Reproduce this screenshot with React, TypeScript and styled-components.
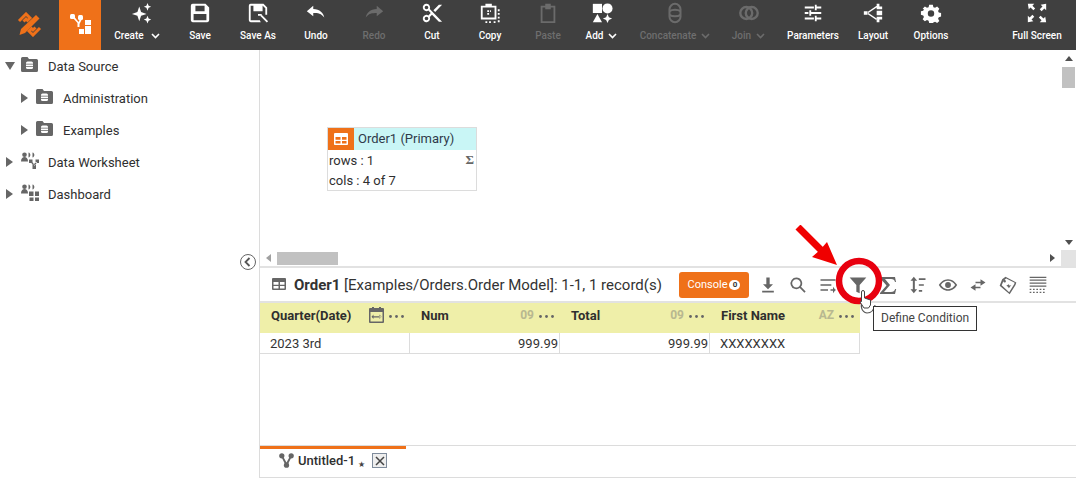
import styled, { createGlobalStyle } from "styled-components";
import type { ReactNode } from "react";

const DARK = "#404040";
const ORANGE = "#ef7119";
const GREY = "#666666";

const GlobalStyle = createGlobalStyle`
  html, body {
    margin: 0;
    padding: 0;
    background: #ffffff;
    font-family: Roboto, "Liberation Sans", sans-serif;
    overflow: hidden;
  }
`;

type IconProps = { children: ReactNode; size?: number; color?: string };

function Icon({ children, size = 22, color = "#ffffff" }: IconProps) {
  return (
    <svg width={size} height={size} viewBox="0 0 24 24" fill={color} stroke="none">
      {children}
    </svg>
  );
}

const Chevron = ({ color }: { color: string }) => (
  <svg width="9" height="6" viewBox="0 0 9 6" fill="none" stroke={color} strokeWidth="1.6">
    <path d="M1 1l3.5 3.5L8 1" />
  </svg>
);

const toolbarItems: {
  label: string;
  width: number;
  disabled?: boolean;
  menu?: boolean;
  pull?: number;
  icon: ReactNode;
}[] = [
  {
    label: "Create",
    width: 59,
    menu: true,
    pull: 9,
    icon: (
      <>
        <path d="M9 5l2 6 6 2-6 2-2 6-2-6-6-2 6-2z" />
        <path d="M18 1l1.2 3 2.8 1.2-2.8 1.2L18 9.5l-1.2-3.1-2.8-1.2 2.8-1.2zM18 15l1.2 3 2.8 1.2-2.8 1.2-1.2 3-1.2-3-2.8-1.2 2.8-1.2z" />
      </>
    ),
  },
  {
    label: "Save",
    width: 58,
    icon: (
      <path
        fillRule="evenodd"
        d="M5 2h13l4 4v14a2 2 0 0 1-2 2H4a2 2 0 0 1-2-2V4a2 2 0 0 1 2-2zm2 2v6h10V4zm-2 9v7h14v-7z"
      />
    ),
  },
  {
    label: "Save As",
    width: 58,
    icon: (
      <>
        <path
          fillRule="evenodd"
          d="M4 2h14l4 4v8h-2V6.800L17.200 4H17v6H7V4H4v16h10l1 2H4a2 2 0 0 1-2-2V4a2 2 0 0 1 2-2zm8 11h4v2h-4z"
        />
        <path d="M16 14l7 7-1.400 1.400-7-7z" />
      </>
    ),
  },
  {
    label: "Undo",
    width: 58,
    icon: <path d="M9 7.500V4L2 10l7 5.500V12c5 0 9 .5 12 5-.5-5-5-9.500-12-9.500z" />,
  },
  {
    label: "Redo",
    width: 58,
    disabled: true,
    icon: <path d="M15 7.500V4l7 6-7 5.500V12c-5 0-9 .5-12 5 .5-5 5-9.500 12-9.500z" />,
  },
  {
    label: "Cut",
    width: 58,
    icon: (
      <path d="M9.600 7.600A4 4 0 1 0 8 9.400l2.600 2.600L8 14.600a4 4 0 1 0 1.600 1.800l2.400-2.400 7.500 7.500H23zM6 8a2 2 0 1 1 0-4 2 2 0 0 1 0 4zm0 12a2 2 0 1 1 0-4 2 2 0 0 1 0 4zM23 3h-3.500l-6 6 2 2z" />
    ),
  },
  {
    label: "Copy",
    width: 58,
    icon: (
      <>
        <path fillRule="evenodd" d="M2 4h5V2h7v2h5v15H2zm2 2v11h13V6z" />
        <path d="M9 9h2v2H9zM12 9h1v2h-1zM9 12h2v2H9zM20.500 8h2v2h-2zM20.500 12h2v2h-2zM20.500 16h2v2h-2zM20.500 20h2v2h-2zM16 21h2v2h-2zM11 21h2v2h-2zM7 21h2v2H7z" />
      </>
    ),
  },
  {
    label: "Paste",
    width: 58,
    disabled: true,
    icon: <path fillRule="evenodd" d="M4 4h5V2h6v2h5v19H4zm2 2v15h12V6h-3v2H9V6z" />,
  },
  {
    label: "Add",
    width: 49,
    menu: true,
    icon: (
      <>
        <path d="M2 2h10v10H2z" />
        <circle cx="18" cy="7" r="5.500" />
        <path d="M7 13l5 9H2z" />
        <path d="M18 13l1.500 3.500L23 18l-3.500 1.500L18 23l-1.500-3.500L13 18l3.500-1.500z" />
      </>
    ),
  },
  {
    label: "Concatenate",
    width: 98,
    disabled: true,
    menu: true,
    icon: (
      <g fill="none" stroke="#6b6b6b" strokeWidth="2.200">
        <rect x="6" y="2" width="12" height="20" rx="6" />
        <path d="M6 10c3-2 9-2 12 0M6 14c3 2 9 2 12 0" />
      </g>
    ),
  },
  {
    label: "Join",
    width: 49,
    disabled: true,
    menu: true,
    icon: (
      <g fill="none" stroke="#6b6b6b" strokeWidth="2.600">
        <circle cx="9" cy="12" r="6.500" />
        <circle cx="15" cy="12" r="6.500" />
      </g>
    ),
  },
];

const rightItems: { label: string; width: number; icon: ReactNode }[] = [
  {
    label: "Parameters",
    width: 72,
    icon: (
      <path d="M3 5h10v2H3zM16 5h5v2h-5zM14 3h2v6h-2zM3 11h4v2H3zM10 11h11v2H10zM8 9h2v6H8zM3 17h10v2H3zM16 17h5v2h-5zM14 15h2v6h-2z" />
    ),
  },
  {
    label: "Layout",
    width: 48,
    icon: (
      <path d="M2 10h4v4H2zM16 2h3v3h3v3h-6zM16 9.500h6v5h-6zM16 16h6v3h-3v3h-3zM6 11l10-7 .8 1.400L7 12zM6 13l10 7 .8-1.400L7 12z" />
    ),
  },
  {
    label: "Options",
    width: 68,
    icon: (
      <path
        fillRule="evenodd"
        d="M10 3h4l.6 2.600 1.800.8 2.300-1.400 2.400 2.400-1.400 2.300.8 1.800 2.500.6v3.800l-2.500.6-.8 1.800 1.400 2.300-2.400 2.400-2.300-1.400-1.800.8L14 23h-4l-.6-2.500-1.800-.8-2.300 1.400-2.400-2.400 1.400-2.300-.8-1.800-2.500-.6v-3.800l2.500-.6.8-1.800L2.900 7.400l2.400-2.400 2.300 1.400 1.800-.8zm2 6a3.500 3.500 0 1 0 0 7 3.500 3.500 0 0 0 0-7z"
      />
    ),
  },
];

const treeRows: { label: string; open?: boolean; depth: 0 | 1; kind: "db" | "sheet" | "dash" }[] = [
  { label: "Data Source", open: true, depth: 0, kind: "db" },
  { label: "Administration", depth: 1, kind: "db" },
  { label: "Examples", depth: 1, kind: "db" },
  { label: "Data Worksheet", depth: 0, kind: "sheet" },
  { label: "Dashboard", depth: 0, kind: "dash" },
];

function TreeIcon({ kind }: { kind: "db" | "sheet" | "dash" }) {
  if (kind === "db") {
    return (
      <svg width="17" height="15" viewBox="0 0 17 15">
        <path d="M1.500 0h5l1.500 2h7.500A1.500 1.500 0 0 1 17 3.500V13.500a1.500 1.500 0 0 1-1.500 1.500h-14A1.500 1.500 0 0 1 0 13.500v-12A1.500 1.500 0 0 1 1.500 0z" fill={GREY} />
        <rect x="5" y="4.500" width="7" height="7.500" rx="1.500" fill="#ffffff" />
        <path d="M5 6.800h7v.7H5zM5 9.200h7v.7H5z" fill={GREY} />
      </svg>
    );
  }
  return (
    <svg width="18" height="17" viewBox="0 0 18 17" fill={GREY}>
      <circle cx="3.500" cy="2.800" r="2.300" />
      <path d="M0 9.500c0-3 1.500-4.500 3.500-4.500S7 6.500 7 9.500z" />
      <path d="M7.500 .5c2.500 .5 2.500 4.500 0 5zM11.500 .5c2.500 .5 2.500 4.500 0 5z" />
      {kind === "sheet" ? (
        <path d="M8 7.500h3.500V11H8zM14.500 7.500H18V11h-3.500zM11.500 13H15v4h-3.500zM10 10.500l1.200-.8 2.500 3.500-1.200.8zM16 10.500l-1.200-.8-2.500 3.500 1.200.8z" />
      ) : (
        <path d="M8 7.500h4.500V12H8zM14 7.500h4V12h-4zM8.500 13.500h4V17h-4zM14 13.500h4V17h-4z" />
      )}
    </svg>
  );
}

const GridGlyph = ({ color, size }: { color: string; size: number }) => (
  <svg width={size} height={size * 0.86} viewBox="0 0 14 12">
    <path
      fillRule="evenodd"
      fill={color}
      d="M1 0h12a1 1 0 0 1 1 1v10a1 1 0 0 1-1 1H1a1 1 0 0 1-1-1V1a1 1 0 0 1 1-1zm.500 4v2.800h5V4zm6.500 0v2.800h4.500V4zM1.500 8v2.500h5V8zM8 8v2.500h4.500V8z"
    />
  </svg>
);

const MoreDots = () => (
  <svg width="15" height="3" viewBox="0 0 15 3" fill="#666666">
    <circle cx="1.500" cy="1.500" r="1.400" />
    <circle cx="7.500" cy="1.500" r="1.400" />
    <circle cx="13.500" cy="1.500" r="1.400" />
  </svg>
);

const columns: { title: string; hint: "calendar" | string; value: string; numeric?: boolean }[] = [
  { title: "Quarter(Date)", hint: "calendar", value: "2023 3rd" },
  { title: "Num", hint: "09", value: "999.99", numeric: true },
  { title: "Total", hint: "09", value: "999.99", numeric: true },
  { title: "First Name", hint: "AZ", value: "XXXXXXXX" },
];

const panelTools: { name: string; size?: number; shape: ReactNode }[] = [
  { name: "download", shape: <path d="M10 3h4v8h4l-6 6-6-6h4zM5 19h14v2H5z" /> },
  {
    name: "search",
    shape: (
      <path
        fillRule="evenodd"
        d="M10 3a7 7 0 0 1 5.600 11.200l5.600 5.600-1.500 1.500-5.600-5.600A7 7 0 1 1 10 3zm0 2a5 5 0 1 0 0 10 5 5 0 0 0 0-10z"
      />
    ),
  },
  { name: "sort", shape: <path d="M3 5h18v2H3zM3 11h13v2H3zM3 17h9v2H3zM15 17h6v2h-6zM18 14l3 4-3 4z" /> },
  { name: "filter", shape: <path d="M2 3h20l-8 9v10l-4-2v-8z" /> },
  {
    name: "sigma",
    size: 24,
    shape: <path d="M4 4h15l1 5h-1c-.5-2-1.500-3-4-3H9l5 6-6 7h7c2.500 0 3.500-1 4.200-3h1L19 21H4v-1l6.500-7.500L4 5z" />,
  },
  { name: "height", shape: <path d="M7 2l4 5H8.200v10H11l-4 5-4-5h2.800V7H3zM13 4h8v2h-8zM13 11h6v2h-6zM13 18h4v2h-4z" /> },
  {
    name: "eye",
    shape: (
      <path
        fillRule="evenodd"
        d="M12 5c5 0 9 3.500 11 7-2 3.500-6 7-11 7S3 15.500 1 12c2-3.500 6-7 11-7zm0 2c-3.800 0-6.800 2.400-8.600 5 1.800 2.600 4.800 5 8.600 5s6.800-2.400 8.600-5C18.800 9.400 15.800 7 12 7zm0 1.500a3.500 3.500 0 1 1 0 7 3.500 3.500 0 0 1 0-7z"
      />
    ),
  },
  { name: "swap", shape: <path d="M15 5l6 4-6 4v-3H9V8h6zM9 11v3h6v2H9v3l-6-4z" /> },
  {
    name: "tag",
    shape: (
      <path
        fillRule="evenodd"
        d="M9 2l13 7-1 3-7 11L2 13l3-8zm.800 2.300L6.700 7l-2.300 5.300 9 8.300 6-9.600.6-1.800zM8 6a1.500 1.500 0 1 1 0 3 1.500 1.500 0 0 1 0-3zM10 13l3-2 1 2 2-1-3 4-1-2z"
      />
    ),
  },
  {
    name: "rows",
    shape: (
      <path d="M2 2h20v1.500H2zM2 5.500h20V7H2zM2 9h20v1.500H2zM2 12.500h20V14H2zM2 16.500h2V18H2zM6 16.500h2V18H6zM10 16.500h2V18h-2zM14 16.500h2V18h-2zM18 16.500h2V18h-2zM2 20h2v1.500H2zM6 20h2v1.500H6zM10 20h2v1.500h-2zM14 20h2v1.500h-2zM18 20h2v1.500h-2z" />
    ),
  },
];

function App() {
  return (
    <>
      <GlobalStyle />
      <Page>
        <Toolbar>
          <Logo>
            <svg width="25" height="25" viewBox="0 0 25 25" fill="none" stroke={ORANGE} strokeWidth="3">
              <path d="M2 9l7-7 4 4-2.500 2.500-1.500-1.500-2.500 2.500M23 16l-7 7-4-4 2.500-2.500 1.500 1.500 2.500-2.500" />
              <path d="M19 3l3.500 3.500L8 21l-5.500 2L4 17z" fill={ORANGE} stroke="none" />
            </svg>
          </Logo>
          <ModeTab>
            <svg width="21" height="20" viewBox="0 0 21 20" fill="#ffffff">
              <rect x="0" y="0" width="5" height="5" rx="1.500" />
              <rect x="8" y="1" width="5" height="5" rx="1.500" />
              <path d="M3 4l1.500-1 4 5 2-4 1.500 1-2.500 5v3H7.500v-4z" />
              <path d="M15 6h6v5h-6zM15 12h6v8h-6zM9 15h5v5H9z" />
            </svg>
          </ModeTab>
          <ToolGroup>
            {toolbarItems.map((item) => (
              <ToolItem key={item.label} $width={item.width}>
                <Icon color={item.disabled ? "#6b6b6b" : "#ffffff"}>{item.icon}</Icon>
                <ToolLabel $disabled={item.disabled} $menu={item.menu} $pull={item.pull}>
                  {item.label}
                  {item.menu && <Chevron color={item.disabled ? "#6b6b6b" : "#ffffff"} />}
                </ToolLabel>
              </ToolItem>
            ))}
          </ToolGroup>
          <RightGroup>
            {rightItems.map((item) => (
              <ToolItem key={item.label} $width={item.width}>
                <Icon>{item.icon}</Icon>
                <ToolLabel>{item.label}</ToolLabel>
              </ToolItem>
            ))}
          </RightGroup>
          <FullScreen>
            <ToolItem $width={58}>
              <Icon>
                <path d="M2 2h7L7 4l3 3-2 2-3-3-2 2zM22 2v7l-2-2-3 3-2-2 3-3-2-2zM2 22v-7l2 2 3-3 2 2-3 3 2 2zM22 22h-7l2-2-3-3 2-2 3 3 2-2z" />
              </Icon>
              <ToolLabel>Full Screen</ToolLabel>
            </ToolItem>
          </FullScreen>
        </Toolbar>

        <Body>
          <Sidebar>
            {treeRows.map((row) => (
              <TreeRow key={row.label} $depth={row.depth}>
                <CaretSlot>
                  <Caret $open={row.open} />
                </CaretSlot>
                <TreeIconSlot>
                  <TreeIcon kind={row.kind} />
                </TreeIconSlot>
                <TreeLabel>{row.label}</TreeLabel>
              </TreeRow>
            ))}
            <CollapseButton>
              <svg width="10" height="10" viewBox="0 0 10 10" fill="none" stroke="#555555" strokeWidth="1.800">
                <path d="M6.500 1L2.500 5l4 4" />
              </svg>
            </CollapseButton>
          </Sidebar>

          <Main>
            <Canvas>
              <CanvasArea>
                <Node>
                  <NodeHead>
                    <NodeBadge>
                      <GridGlyph color="#ffffff" size={14} />
                    </NodeBadge>
                    <NodeTitle>Order1 (Primary)</NodeTitle>
                  </NodeHead>
                  <NodeLine>
                    rows : 1<NodeSigma>Σ</NodeSigma>
                  </NodeLine>
                  <NodeLine>cols : 4 of 7</NodeLine>
                </Node>
              </CanvasArea>
              <VerticalBar>
                <ArrowUp />
                <VerticalThumb />
                <ArrowDown />
              </VerticalBar>
              <HorizontalBar>
                <ArrowLeft />
                <HorizontalThumb />
                <ArrowRight />
              </HorizontalBar>
              <ScrollCorner />
            </Canvas>

            <PanelHeader>
              <GridGlyph color={GREY} size={14} />
              <PanelTitle>
                <strong>Order1</strong> [Examples/Orders.Order Model]: 1-1, 1 record(s)
              </PanelTitle>
              <ConsoleButton>
                Console<ConsoleCount>0</ConsoleCount>
              </ConsoleButton>
              <PanelTools>
                {panelTools.map((tool) => (
                  <ToolSlot key={tool.name}>
                    <Icon size={tool.size ?? 20} color={GREY}>
                      {tool.shape}
                    </Icon>
                  </ToolSlot>
                ))}
              </PanelTools>
            </PanelHeader>

            <DataTable>
              {columns.map((col) => (
                <HeadCell key={col.title}>
                  <HeadTitle>{col.title}</HeadTitle>
                  {col.hint === "calendar" ? (
                    <svg width="15" height="16" viewBox="0 0 15 16">
                      <path
                        fillRule="evenodd"
                        fill={GREY}
                        d="M1 1h2V0h2v1h5V0h2v1h2a1 1 0 0 1 1 1v13a1 1 0 0 1-1 1H1a1 1 0 0 1-1-1V2a1 1 0 0 1 1-1zm.500 4v9.500h12V5z"
                      />
                      <path fill={GREY} d="M3 9.200h9v1.200H3zM4.500 7.500v4.500L2.500 9.800zM10.500 7.500v4.500l2-2.200z" />
                    </svg>
                  ) : (
                    <TypeHint>{col.hint}</TypeHint>
                  )}
                  <MoreSlot>
                    <MoreDots />
                  </MoreSlot>
                </HeadCell>
              ))}
              {columns.map((col) => (
                <BodyCell key={col.title} $numeric={col.numeric}>
                  {col.value}
                </BodyCell>
              ))}
            </DataTable>

            <Spacer />

            <TabBar>
              <Tab>
                <svg width="15" height="15" viewBox="0 0 16 16" fill={GREY}>
                  <circle cx="3" cy="3" r="2.800" />
                  <circle cx="13" cy="3" r="2.800" />
                  <circle cx="8" cy="13" r="2.800" />
                  <path d="M2.500 4l1.500-1 5 9-2 1zM13.500 4L12 3l-5 9 2 1z" />
                </svg>
                <TabName>Untitled-1</TabName>
                <TabStar>★</TabStar>
                <TabClose>
                  <svg width="10" height="10" viewBox="0 0 10 10" stroke="#444444" strokeWidth="1.500">
                    <path d="M1 1l8 8M9 1L1 9" />
                  </svg>
                </TabClose>
              </Tab>
            </TabBar>
          </Main>
        </Body>

        <Annotation width="110" height="90" viewBox="0 0 110 90">
          <path d="M3 2L28 27" stroke="#f00000" strokeWidth="7" fill="none" />
          <path d="M42 40L17 32 25 25 32 17z" fill="#f00000" />
          <circle cx="64" cy="56" r="20" fill="none" stroke="#e8000f" strokeWidth="6.500" />
        </Annotation>
        <Pointer width="18" height="26" viewBox="0 0 18 26">
          <path d="M5 11c-3 4-2 11 4 12 4 0 7-3 8-8" fill="#ffffff" stroke="#555555" strokeWidth="1.200" />
          <path
            d="M3.500 2a1.500 1.500 0 0 1 3 0v6l6 2v5l-2 3H6L2 12l1.500-.5z"
            fill="#ffffff"
            stroke="#444444"
            strokeWidth="1"
          />
        </Pointer>
        <Tooltip>Define Condition</Tooltip>
      </Page>
    </>
  );
}

const Page = styled.div`
  position: relative;
  width: 1076px;
  height: 478px;
  display: flex;
  flex-direction: column;
  overflow: hidden;
`;

const Toolbar = styled.div`
  display: flex;
  align-items: stretch;
  height: 50px;
  background: ${DARK};
  flex-shrink: 0;
`;

const Logo = styled.div`
  width: 59px;
  display: flex;
  align-items: center;
  justify-content: center;
  padding-bottom: 2px;
  box-sizing: border-box;
`;

const ModeTab = styled.div`
  width: 42px;
  background: ${ORANGE};
  display: flex;
  align-items: center;
  justify-content: center;
  padding-bottom: 3px;
  box-sizing: border-box;
`;

const ToolGroup = styled.div`
  display: flex;
  margin-left: 11px;
`;

const RightGroup = styled.div`
  display: flex;
  margin-left: 4px;
`;

const FullScreen = styled.div`
  margin-left: auto;
  margin-right: 10px;
  display: flex;
`;

const ToolItem = styled.div<{ $width: number }>`
  width: ${(p) => p.$width}px;
  display: flex;
  flex-direction: column;
  align-items: center;
  padding-top: 2px;
  box-sizing: border-box;
`;

const ToolLabel = styled.div<{ $disabled?: boolean; $menu?: boolean; $pull?: number }>`
  display: flex;
  align-items: center;
  gap: ${(p) => (p.$pull ? 7 : p.$menu ? 5 : 0)}px;
  margin-top: 6px;
  margin-right: ${(p) => p.$pull ?? 0}px;
  font-size: 10px;
  font-weight: 500;
  line-height: 12px;
  white-space: nowrap;
  color: ${(p) => (p.$disabled ? "#6e6e6e" : "#ffffff")};
`;

const Body = styled.div`
  flex: 1;
  display: flex;
  min-height: 0;
`;

const Sidebar = styled.div`
  position: relative;
  width: 259px;
  flex-shrink: 0;
  border-right: 1px solid #dcdcdc;
`;

const TreeRow = styled.div<{ $depth: 0 | 1 }>`
  display: flex;
  align-items: center;
  height: 32px;
  padding-left: ${(p) => (p.$depth === 1 ? 20 : 5)}px;
`;

const CaretSlot = styled.span`
  width: 15px;
  margin-right: 1px;
  display: flex;
`;

const Caret = styled.span<{ $open?: boolean }>`
  width: 0;
  height: 0;
  margin-left: ${(p) => (p.$open ? 0 : 1)}px;
  border-style: solid;
  ${(p) =>
    p.$open
      ? `border-width: 8px 5.5px 0 5.5px; border-color: ${GREY} transparent transparent transparent;`
      : `border-width: 5px 0 5px 7px; border-color: transparent transparent transparent ${GREY};`}
`;

const TreeIconSlot = styled.span`
  width: 18px;
  display: flex;
  margin-right: 9px;
  margin-top: -3px;
`;

const TreeLabel = styled.span`
  font-size: 13px;
  color: #2f2f2f;
`;

const CollapseButton = styled.div`
  position: absolute;
  top: 204px;
  left: 240px;
  width: 14px;
  height: 14px;
  border: 1.5px solid ${GREY};
  border-radius: 50%;
  background: #ffffff;
  display: flex;
  align-items: center;
  justify-content: center;
`;

const Main = styled.div`
  flex: 1;
  min-width: 0;
  display: flex;
  flex-direction: column;
  border-bottom: 1px solid #dcdcdc;
`;

const Canvas = styled.div`
  display: grid;
  grid-template-columns: 1fr 15px;
  grid-template-rows: 200px 16px;
  height: 216px;
  border-bottom: 2px solid #e2e2e2;
  box-sizing: content-box;
`;

const CanvasArea = styled.div`
  position: relative;
`;

const Node = styled.div`
  position: absolute;
  left: 67px;
  top: 77px;
  width: 148px;
  height: 62px;
  border: 1px solid #dcdcdc;
  background: #ffffff;
`;

const NodeHead = styled.div`
  display: flex;
  align-items: center;
  height: 22px;
  background: #c9f6f6;
  margin-bottom: 1px;
`;

const NodeBadge = styled.div`
  width: 26px;
  height: 22px;
  background: ${ORANGE};
  display: flex;
  align-items: center;
  justify-content: center;
`;

const NodeTitle = styled.span`
  margin-left: 4px;
  margin-top: -2px;
  font-size: 13px;
  color: #2f3a4a;
`;

const NodeLine = styled.div`
  position: relative;
  height: 19.5px;
  line-height: 19.5px;
  padding-left: 1px;
  font-size: 13px;
  color: #2f2f2f;
`;

const NodeSigma = styled.span`
  position: absolute;
  right: 2px;
  top: -1px;
  font-size: 13px;
  font-weight: 700;
  font-family: "Liberation Serif", serif;
  color: ${GREY};
`;

const VerticalBar = styled.div`
  display: flex;
  flex-direction: column;
  align-items: center;
  padding-top: 6px;
`;

const ArrowUp = styled.span`
  border-style: solid;
  border-width: 0 4px 5px 4px;
  border-color: transparent transparent #505050 transparent;
`;

const ArrowDown = styled.span`
  margin-top: auto;
  margin-bottom: 5px;
  border-style: solid;
  border-width: 5px 4px 0 4px;
  border-color: #505050 transparent transparent transparent;
`;

const VerticalThumb = styled.div`
  width: 13px;
  height: 21px;
  margin-top: 6px;
  background: #c1c1c1;
`;

const HorizontalBar = styled.div`
  display: flex;
  align-items: center;
  padding-left: 6px;
  padding-right: 6px;
`;

const ArrowLeft = styled.span`
  border-style: solid;
  border-width: 4px 5px 4px 0;
  border-color: transparent #a0a0a0 transparent transparent;
`;

const ArrowRight = styled.span`
  margin-left: auto;
  border-style: solid;
  border-width: 4px 0 4px 5px;
  border-color: transparent transparent transparent #505050;
`;

const HorizontalThumb = styled.div`
  width: 61px;
  height: 13px;
  margin-left: 6px;
  background: #c1c1c1;
`;

const ScrollCorner = styled.div`
  background: #e3e3e3;
`;

const PanelHeader = styled.div`
  display: flex;
  align-items: center;
  height: 33px;
  padding-left: 12px;
  border-bottom: 2px solid #e2e2e2;
  flex-shrink: 0;
`;

const PanelTitle = styled.div`
  margin-left: 8px;
  width: 385px;
  font-size: 15px;
  color: #333333;
  white-space: nowrap;

  strong {
    font-weight: 700;
  }
`;

const ConsoleButton = styled.div`
  display: flex;
  align-items: center;
  justify-content: center;
  gap: 2px;
  width: 70px;
  height: 26px;
  background: ${ORANGE};
  border-radius: 3px;
  font-size: 11px;
  color: #ffffff;
`;

const ConsoleCount = styled.span`
  width: 11px;
  height: 10px;
  border-radius: 5px;
  background: #ffffff;
  color: #333333;
  font-size: 8px;
  font-weight: 700;
  line-height: 10px;
  text-align: center;
`;

const PanelTools = styled.div`
  display: flex;
  align-items: center;
  margin-left: 4px;
`;

const ToolSlot = styled.span`
  width: 30px;
  display: flex;
  justify-content: center;
`;

const DataTable = styled.div`
  display: grid;
  grid-template-columns: repeat(4, 150px);
  width: 600px;
  flex-shrink: 0;
`;

const HeadCell = styled.div`
  display: flex;
  align-items: center;
  height: 30px;
  padding: 0 6px 6px 11px;
  background: #efefa9;
  box-sizing: border-box;
`;

const HeadTitle = styled.span`
  flex: 1;
  font-size: 13px;
  font-weight: 700;
  color: #2f2f2f;
  white-space: nowrap;
`;

const TypeHint = styled.span`
  font-size: 12px;
  font-weight: 700;
  color: #b8b890;
`;

const MoreSlot = styled.span`
  display: flex;
  margin-left: 5px;
  margin-top: 2px;
`;

const BodyCell = styled.div<{ $numeric?: boolean }>`
  height: 20px;
  line-height: 22px;
  padding: 0 1px 0 10px;
  font-size: 13px;
  color: #333333;
  text-align: ${(p) => (p.$numeric ? "right" : "left")};
  border-right: 1px solid #dcdcdc;
  border-bottom: 1px solid #dcdcdc;
`;

const Spacer = styled.div`
  flex: 1;
`;

const TabBar = styled.div`
  height: 31px;
  border-top: 1px solid #dcdcdc;
  flex-shrink: 0;
`;

const Tab = styled.div`
  display: flex;
  align-items: center;
  width: 146px;
  height: 31px;
  padding: 0 0 5px 19px;
  border-top: 3px solid ${ORANGE};
  box-sizing: border-box;
`;

const TabName = styled.span`
  margin-left: 4px;
  font-size: 13px;
  font-weight: 500;
  color: #2f2f2f;
`;

const TabStar = styled.span`
  margin: 8px 7px 0 3px;
  font-size: 8px;
  color: #444444;
`;

const TabClose = styled.span`
  width: 13px;
  height: 13px;
  border: 1px solid #7f8c9c;
  background: #eeeeee;
  display: flex;
  align-items: center;
  justify-content: center;
`;

const Annotation = styled.svg`
  position: absolute;
  left: 795px;
  top: 225px;
  pointer-events: none;
`;

const Pointer = styled.svg`
  position: absolute;
  left: 858px;
  top: 290px;
`;

const Tooltip = styled.div`
  position: absolute;
  left: 873px;
  top: 306px;
  height: 23px;
  padding: 0 7px;
  line-height: 23px;
  font-size: 12px;
  color: #444444;
  background: #ffffff;
  border: 1px solid #333333;
`;

export default App;
